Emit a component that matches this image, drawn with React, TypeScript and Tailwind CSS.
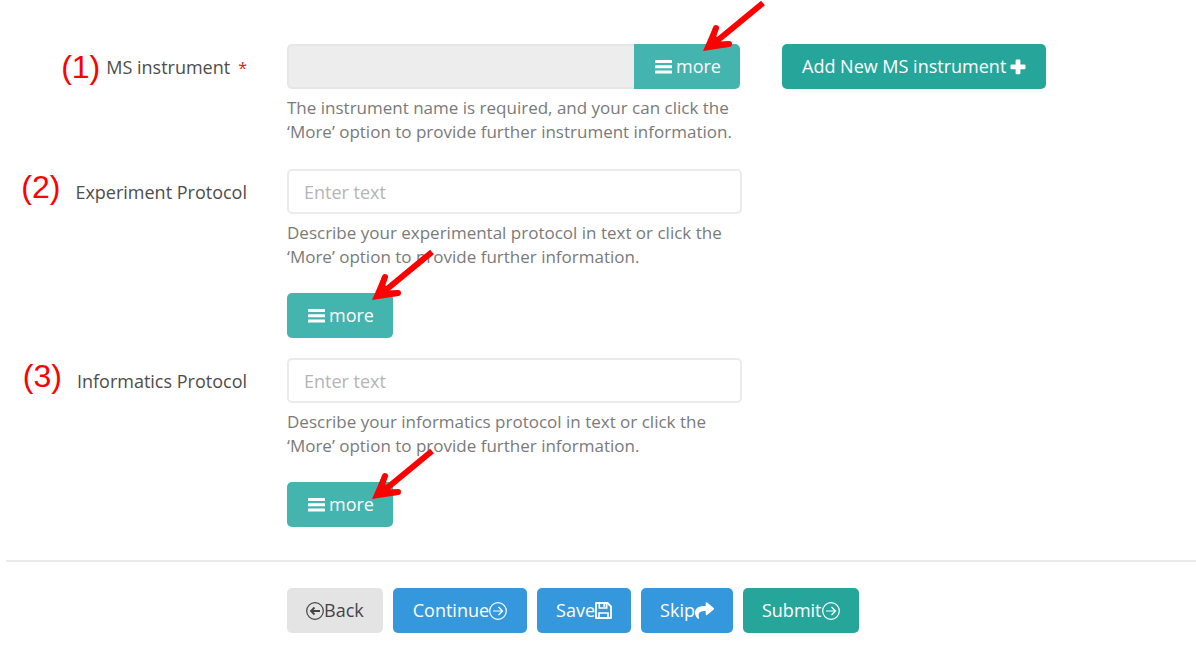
import type { ReactNode } from "react";
import { FaShare } from "react-icons/fa";

const fieldClass =
  "block w-full h-[45px] rounded-[5px] border-2 border-[#ebebeb] px-[15px] text-[18px] text-[#444] placeholder:text-[#b5b5b5] focus:outline-none";

const buttonClass =
  "inline-flex h-[45px] items-center justify-center text-[18px] whitespace-nowrap cursor-pointer";

function BarsIcon() {
  return (
    <svg viewBox="0 0 17 15" className="w-[17px] h-[15px] shrink-0" fill="currentColor" aria-hidden="true">
      <rect x="0" y="1" width="17" height="3" rx="0.5" />
      <rect x="0" y="6.2" width="17" height="3" rx="0.5" />
      <rect x="0" y="11.4" width="17" height="3" rx="0.5" />
    </svg>
  );
}

function PlusIcon() {
  return (
    <svg viewBox="0 0 16 16" className="w-4 h-4 shrink-0" fill="currentColor" aria-hidden="true">
      <path d="M6.6 0.5h2.8a1 1 0 0 1 1 1v4.1h4.1a1 1 0 0 1 1 1v2.6a1 1 0 0 1-1 1h-4.1v4.1a1 1 0 0 1-1 1H6.6a1 1 0 0 1-1-1v-4.1H1.5a1 1 0 0 1-1-1V6.6a1 1 0 0 1 1-1h4.1V1.5a1 1 0 0 1 1-1z" />
    </svg>
  );
}

function CircleArrow({ left = false }: { left?: boolean }) {
  return (
    <svg
      viewBox="0 0 18 18"
      className="w-[18px] h-[18px] shrink-0"
      fill="none"
      stroke="currentColor"
      strokeWidth="1.2"
      aria-hidden="true"
    >
      <circle cx="9" cy="9" r="8.3" />
      {left ? <path d="M14 9H4.5M8.5 5.5L5 9l3.5 3.5" strokeWidth="1.8" /> : <path d="M4 9h9.5M9.5 5l4 4-4 4" />}
    </svg>
  );
}

function SaveIcon() {
  return (
    <svg viewBox="0 0 17 17" className="w-[17px] h-[17px] shrink-0" fill="none" stroke="currentColor" aria-hidden="true">
      <path d="M1 1h11.5L16 4.5V16H1z" strokeWidth="1.8" strokeLinejoin="round" />
      <path d="M4 16v-5h9v5" strokeWidth="1.6" />
      <path d="M4.3 1v5h7.4V1" strokeWidth="1.6" />
      <path d="M9.3 1.5v3.4" strokeWidth="2" />
    </svg>
  );
}

function Arrow({ className }: { className: string }) {
  return (
    <svg
      viewBox="0 0 64 54"
      className={`absolute w-[64px] h-[54px] pointer-events-none ${className}`}
      fill="none"
      stroke="#ff0000"
      strokeWidth="6"
      aria-hidden="true"
    >
      <path d="M60 3L9 45" />
      <path d="M13 28L7 45l19-1" strokeLinecap="round" />
      <path d="M0 51L10 28l5 12 11 7z" fill="#ff0000" stroke="none" />
    </svg>
  );
}

function MoreButton({ attached = false, arrowClass }: { attached?: boolean; arrowClass: string }) {
  return (
    <div className="relative shrink-0">
      <button
        type="button"
        className={`${buttonClass} w-[106px] gap-1 pl-[2px] bg-[#44b4ae] text-white ${attached ? "rounded-r-[5px]" : "rounded-[5px]"}`}
      >
        <BarsIcon />
        more
      </button>
      <Arrow className={arrowClass} />
    </div>
  );
}

type RowProps = {
  num: string;
  id: string;
  label: string;
  required?: boolean;
  children: ReactNode;
};

function Row({ num, id, label, required, children }: RowProps) {
  return (
    <div className="flex items-start gap-10">
      <div className="flex w-[247px] shrink-0 justify-end">
        <span className={`font-['Liberation_Sans',sans-serif] text-[32px] text-[#ff0000] ${required ? "leading-[46px] mr-[6px]" : "leading-[36px] mr-[15px]"}`}>
          {num}
        </span>
        <label htmlFor={id} className="text-[18px] leading-[46px] text-[#4d4d4d] whitespace-nowrap">
          {label}
          {required && <span className="ml-2 text-[16px] text-[#e02222]">*</span>}
        </label>
      </div>
      {children}
    </div>
  );
}

function HelpText({ children }: { children: ReactNode }) {
  return <p className="mt-[7px] text-[17px] leading-6 text-[#7a7a7a]">{children}</p>;
}

export default function App() {
  return (
    <form className="min-h-screen bg-white pt-11 font-['Open_Sans',sans-serif]" onSubmit={(e) => e.preventDefault()}>
      <div className="flex flex-col gap-5">
        <Row num="(1)" id="instrument" label="MS instrument" required>
          <div className="w-[455px] pb-[5px]">
            <div className="flex pr-[2px]">
              <input id="instrument" type="text" readOnly className="min-w-0 flex-1 h-[45px] rounded-l-[5px] border-2 border-r-0 border-[#e6e6e6] bg-[#ededed] px-[15px] text-[18px]" />
              <MoreButton attached arrowClass="left-[69px] bottom-[35px]" />
            </div>
            <HelpText>
              The instrument name is required, and your can click the ‘More’ option to provide further instrument information.
            </HelpText>
          </div>
          <button type="button" className={`${buttonClass} gap-1 rounded-[5px] bg-[#26a69a] px-5 text-white`}>
            Add New MS instrument
            <PlusIcon />
          </button>
        </Row>

        <Row num="(2)" id="experiment" label="Experiment Protocol">
          <div className="w-[455px]">
            <input id="experiment" type="text" placeholder="Enter text" className={fieldClass} />
            <HelpText>
              Describe your experimental protocol in text or click the ‘More’ option to provide further information.
            </HelpText>
            <div className="mt-6">
              <MoreButton arrowClass="left-[85px] bottom-[35px]" />
            </div>
          </div>
        </Row>

        <Row num="(3)" id="informatics" label="Informatics Protocol">
          <div className="w-[455px]">
            <input id="informatics" type="text" placeholder="Enter text" className={fieldClass} />
            <HelpText>
              Describe your informatics protocol in text or click the ‘More’ option to provide further information.
            </HelpText>
            <div className="mt-6">
              <MoreButton arrowClass="left-[85px] bottom-[25px]" />
            </div>
          </div>
        </Row>
      </div>

      {/* Form actions */}
      <div className="mt-[33px] ml-[6px] flex gap-[10px] border-t-2 border-[#ebebeb] pt-[26px] pl-[281px]">
        <button type="button" className={`${buttonClass} rounded-[5px] bg-[#e4e4e4] px-[19px] text-[#444]`}>
          <CircleArrow left />
          Back
        </button>
        <button type="button" className={`${buttonClass} rounded-[5px] bg-[#3598dc] px-5 text-white`}>
          Continue
          <CircleArrow />
        </button>
        <button type="button" className={`${buttonClass} rounded-[5px] bg-[#3598dc] px-[19px] text-white`}>
          Save
          <SaveIcon />
        </button>
        <button type="button" className={`${buttonClass} rounded-[5px] bg-[#3598dc] px-[19px] text-white`}>
          Skip
          <FaShare className="w-[19px] h-[19px]" aria-hidden="true" />
        </button>
        <button type="submit" className={`${buttonClass} rounded-[5px] bg-[#26a69a] px-[19px] text-white`}>
          Submit
          <CircleArrow />
        </button>
      </div>
    </form>
  );
}
